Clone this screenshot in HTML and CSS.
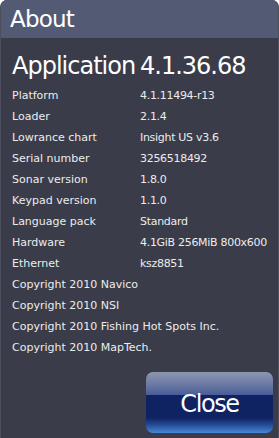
FILE: index.html
```html
<!DOCTYPE html>
<html lang="en">

<head>
    <meta charset="UTF-8">
    <meta name="viewport" content="width=device-width, initial-scale=1.0">
    <title>About</title>
    <link rel="stylesheet" href="styles.css">
</head>

<body>
    <div class="dialog">
        <div class="title">About</div>
        <div class="content">
            <div class="app">
                <span class="label">Application</span>
                <span class="value">4.1.36.68</span>
            </div>
            <div class="row"><span class="label">Platform</span><span class="value">4.1.11494-r13</span></div>
            <div class="row"><span class="label">Loader</span><span class="value">2.1.4</span></div>
            <div class="row"><span class="label">Lowrance chart</span><span class="value">Insight US v3.6</span></div>
            <div class="row"><span class="label">Serial number</span><span class="value">3256518492</span></div>
            <div class="row"><span class="label">Sonar version</span><span class="value">1.8.0</span></div>
            <div class="row"><span class="label">Keypad version</span><span class="value">1.1.0</span></div>
            <div class="row"><span class="label">Language pack</span><span class="value">Standard</span></div>
            <div class="row"><span class="label">Hardware</span><span class="value">4.1GiB 256MiB 800x600</span></div>
            <div class="row"><span class="label">Ethernet</span><span class="value">ksz8851</span></div>
            <div class="row">Copyright 2010 Navico</div>
            <div class="row">Copyright 2010 NSI</div>
            <div class="row">Copyright 2010 Fishing Hot Spots Inc.</div>
            <div class="row">Copyright 2010 MapTech.</div>
        </div>
        <div class="actions">
            <button class="close">Close</button>
        </div>
    </div>
</body>

</html>
```

FILE: styles.css
```css
html,
body {
    margin: 0;
    padding: 0;
    background: #ffffff;
}

.dialog {
    width: 279px;
    height: 438px;
    box-sizing: border-box;
    background: #3a3c4a;
    border-left: 1px solid #4b4e5c;
    border-right: 1px solid #4b4e5c;
    border-radius: 7px 7px 0 0;
    overflow: hidden;
    font-family: "DejaVu Sans", sans-serif;
    color: #f2f2f2;
    display: flex;
    flex-direction: column;
}

.title {
    height: 38px;
    line-height: 38px;
    background: #525b73;
    padding-left: 9px;
    font-size: 23px;
    letter-spacing: -0.8px;
    color: #ffffff;
}

.content {
    padding: 10px 0 0 11px;
}

.app {
    display: flex;
    height: 37px;
    line-height: 36px;
    font-size: 24px;
    letter-spacing: -1px;
    color: #ffffff;
}

.app .label {
    width: 128px;
    flex-shrink: 0;
}

.row {
    display: flex;
    height: 21px;
    line-height: 21px;
    font-size: 11px;
    color: #ececec;
}

.row .label {
    width: 128px;
    flex-shrink: 0;
}

.row .value {
    letter-spacing: -0.3px;
}

.actions {
    flex: 1;
    display: flex;
    justify-content: flex-end;
    align-items: flex-end;
    padding: 0 5px 5px 0;
}

.close {
    width: 127px;
    height: 61px;
    border: none;
    border-radius: 7px;
    font-family: "DejaVu Sans", sans-serif;
    font-size: 24px;
    letter-spacing: -1.4px;
    color: #ffffff;
    padding: 2px 0 0 0;
    background: linear-gradient(to bottom,
            #8d96b0 0%,
            #6c7aa4 20%,
            #4a5d98 37%,
            #0f2262 38%,
            #0f2262 75%,
            #27509c 88%,
            #4a88d8 100%);
}
```
